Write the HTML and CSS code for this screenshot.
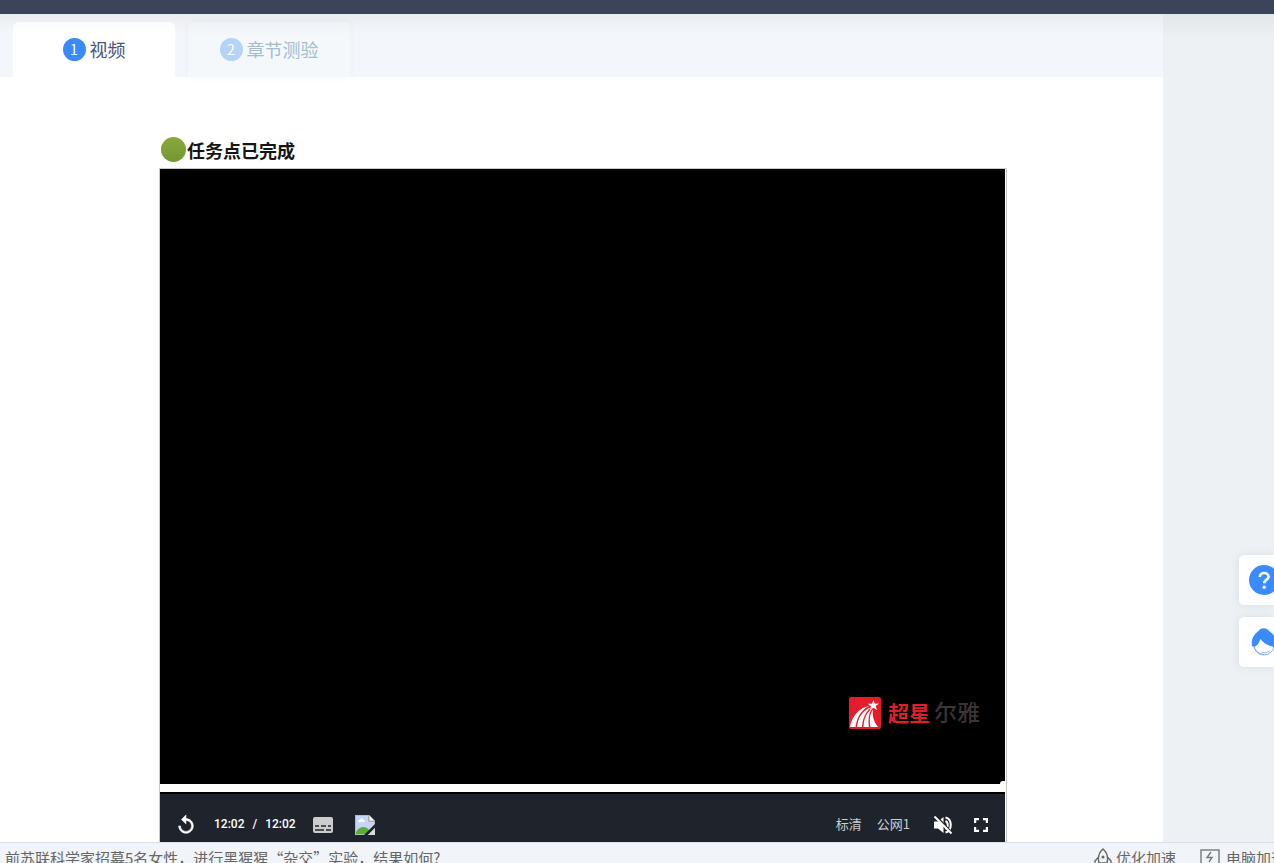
FILE: index.html
```html
<!DOCTYPE html>
<html lang="zh-CN">
<head>
<meta charset="utf-8">
<title>视频</title>
<link rel="stylesheet" href="styles.css">
</head>
<body>
<header class="topbar"></header>
<div class="workspace">
  <main class="content">
    <nav class="tabs">
      <button class="tab tab-active" type="button"><span class="tab-number">1</span><span class="tab-label">视频</span></button>
      <button class="tab" type="button"><span class="tab-number">2</span><span class="tab-label">章节测验</span></button>
    </nav>
    <section class="lesson">
      <p class="task"><span class="task-dot"></span>任务点已完成</p>
      <div class="player">
        <div class="screen">
          <div class="brand">
            <svg class="brand-icon" viewBox="0 0 32 32" aria-hidden="true">
              <rect width="32" height="32" rx="2" fill="#e11d2b"/>
              <path d="M24.500 3l1.400 3.700 4-.2-3.200 2.500 1.300 4-3.600-2.300-3.400 2.500 1.200-4-3.600-2.400 4.300-.1z" fill="#fff"/>
              <path d="M1 30C3 19 10 11 21 8.500 12 13 8 20 6.500 30zM8 30C9 21 13 14 22 10 16 16 13.500 22 13 30zM14.500 30C15 22 17 16 23 11.500 19.500 17 19 23 20 30zM21.500 30C20 22 21 17 24 12.500 23 19 25 25 29 30z" fill="#fff"/>
            </svg>
            <span class="brand-script">超星</span>
            <span class="brand-name">尔雅</span>
          </div>
        </div>
        <div class="progress"></div>
        <div class="controls">
          <button class="control replay" type="button" aria-label="重播">
            <svg viewBox="0 0 24 24" width="22" height="22"><path d="M12 5V1L7 6l5 5V7c3.310 0 6 2.690 6 6s-2.690 6-6 6-6-2.690-6-6H4c0 4.420 3.580 8 8 8s8-3.580 8-8-3.580-8-8-8z" fill="#fff" stroke="#fff" stroke-width=".6"/></svg>
          </button>
          <div class="time"><span>12:02</span><span>/</span><span>12:02</span></div>
          <button class="control captions" type="button" aria-label="字幕">
            <svg viewBox="0 0 20 16" width="20" height="16"><rect width="20" height="16" rx="2" fill="#ccc"/><path d="M2 9h4M8 9h5M15 9h3M2 13h9M13 13h5" stroke="#1f242c" stroke-width="1.500"/></svg>
          </button>
          <svg class="broken" viewBox="0 0 20 20" width="20" height="20" aria-hidden="true">
            <path d="M0 0h14l6 6v14H0z" fill="#b9b9b9"/><path d="M1 1h12v6h6v12H1z" fill="#c3d5f8"/>
            <path d="M14 0l6 6h-6z" fill="#f5f5f5" stroke="#999" stroke-width=".7"/>
            <path d="M3 7c0-2 2-2 2.500-3C7 2.500 8.500 4 8.500 5c1.500 0 1.500 2 .5 2z" fill="#fff"/>
            <path d="M1 19v-2c3-5 9-7 13-2l2 4z" fill="#5aad35"/><path d="M20 9v4l-7 7H9z" fill="#1f242c"/><path d="M20 13v7h-7z" fill="#d5dbe5"/>
          </svg>
          <button class="control quality" type="button">标清</button>
          <button class="control line" type="button">公网1</button>
          <button class="control mute" type="button" aria-label="取消静音">
            <svg viewBox="0 0 20 20" width="20" height="20"><path d="M1 6.500h4L10.500 2v16L5 13.500H1z" fill="#fff"/><path d="M12.500 6c3 1.500 3 6.500 0 8M12.500 2.500c7 1.500 7 13.500 0 15" fill="none" stroke="#fff" stroke-width="2"/><path d="M3 1l16 17" stroke="#1f242c" stroke-width="2"/><path d="M1.500 1.500l17 17" stroke="#fff" stroke-width="2"/></svg>
          </button>
          <button class="control full" type="button" aria-label="全屏">
            <svg viewBox="0 0 14 14" width="14" height="14"><path d="M1 5V1h4M9 1h4v4M13 9v4H9M5 13H1V9" fill="none" stroke="#fff" stroke-width="2.400"/></svg>
          </button>
        </div>
      </div>
    </section>
  </main>
  <aside class="helpers">
    <button class="helper" type="button" aria-label="帮助">
      <svg viewBox="0 0 30 30" width="30" height="30"><circle cx="15" cy="15" r="15" fill="#3a8bff"/><path d="M10.800 12c0-5.200 8.800-5.200 8.800-.3 0 3-4.400 3-4.400 6.500" fill="none" stroke="#fff" stroke-width="2.600"/><circle cx="15.200" cy="22.300" r="1.700" fill="#fff"/></svg>
    </button>
    <button class="helper" type="button" aria-label="客服">
      <svg viewBox="0 0 30 30" width="30" height="30"><circle cx="15" cy="18" r="10" fill="#fff" stroke="#78adfa" stroke-width="1"/><path d="M3 19.500C2 12 5 7 9 4.500 11.500 0 18 0 20.500 4.500 25 7 28 12 27 19.500l-2.500.5C20 18.500 15 17 11.500 12 10 16 8 18.500 6 19.500z" fill="#3a8bff"/><path d="M13 25c3 1.500 6 .5 8-1.500M5 20c2 5 5 7 10 7.500" fill="none" stroke="#78adfa"/></svg>
    </button>
  </aside>
</div>
<footer class="status">
  <a class="news" href="#">前苏联科学家招募5名女性，进行黑猩猩“杂交”实验，结果如何?</a>
  <button class="tool" type="button"><svg viewBox="0 0 18 20" width="18" height="20"><path d="M5 15C3.500 9 5.500 4 9 1c3.500 3 5.500 8 4 14zM4.500 9L1 13v5l4-3M13.500 9l3.500 4v5l-4-3" fill="none" stroke="#666" stroke-width="1.400"/><circle cx="9" cy="9" r="1.500" fill="#666"/></svg>优化加速</button>
  <button class="tool computer" type="button"><svg viewBox="0 0 20 20" width="20" height="20"><rect x="1" y="2" width="18" height="14" fill="none" stroke="#777" stroke-width="1.400"/><path d="M11 4L7 9.500h5L9 14M5 19h10" fill="none" stroke="#777" stroke-width="1.400"/></svg>电脑加速</button>
</footer>
</body>
</html>
```

FILE: styles.css
```css
* { box-sizing: border-box; }
body {
  margin: 0;
  height: 100vh;
  display: flex;
  flex-direction: column;
  overflow: hidden;
  background: #edf1f4;
  font-family: "Noto Sans CJK SC", sans-serif;
}
button {
  border: 0;
  padding: 0;
  background: none;
  font: inherit;
  color: inherit;
}
svg { display: block; flex: none; }
.topbar {
  flex: none;
  height: 14px;
  background: #3c4459;
}
.workspace {
  flex: 1;
  min-height: 0;
  display: flex;
  overflow: hidden;
}
.content {
  flex: 1;
  min-width: 0;
  display: flex;
  flex-direction: column;
  background: #fff;
}
.tabs {
  flex: none;
  height: 63px;
  display: flex;
  align-items: flex-end;
  gap: 13px;
  padding-left: 13px;
  background: linear-gradient(#ebecf0, #f3f7fb 20px);
}
.tab {
  width: 162px;
  height: 55px;
  display: flex;
  align-items: center;
  justify-content: center;
  gap: 4px;
  border-radius: 6px 6px 0 0;
  background: linear-gradient(#f0f2f5, #f4f8fb 14px);
  box-shadow: 0 0 6px rgba(60, 100, 140, .06);
  color: #a3bcd0;
  font-size: 18px;
}
.tab-active {
  background: linear-gradient(#fcfcfd, #fff 14px);
  box-shadow: none;
  color: #4a5578;
}
.tab-label { padding-bottom: 2px; }
.tab-number {
  width: 23px;
  height: 23px;
  border-radius: 50%;
  background: #b5d3f9;
  color: #fff;
  font-size: 14px;
  line-height: 23px;
  text-align: center;
}
.tab-active .tab-number { background: #3a8bff; }
.lesson {
  flex: 1;
  min-height: 0;
  display: flex;
  flex-direction: column;
  padding: 57px 156px 0 159px;
}
.task {
  display: flex;
  align-items: center;
  gap: 1px;
  height: 34px;
  margin: 0;
  padding: 0 2px 3px;
  color: #161616;
  font-size: 18px;
  font-weight: 700;
}
.task-dot {
  width: 25px;
  height: 25px;
  border-radius: 50%;
  background: linear-gradient(#89a93a, #759632);
}
.player {
  flex: 1;
  min-height: 0;
  display: flex;
  flex-direction: column;
  padding-right: 1px;
  border: 1px solid #c8c8c8;
  border-bottom: 0;
}
.screen {
  flex: 1;
  display: flex;
  align-items: flex-end;
  justify-content: flex-end;
  padding: 0 25px 55px 0;
  background: #000;
}
.brand {
  display: flex;
  align-items: center;
  height: 32px;
}
.brand-icon { width: 32px; height: 32px; margin-right: 7px; }
.brand-script {
  margin-right: 4px;
  padding-bottom: 2px;
  color: #df1f2c;
  font-size: 21px;
  font-weight: 700;
}
.brand-name {
  padding-bottom: 4px;
  color: #3b3437;
  font-size: 23px;
  font-weight: 500;
}
.progress {
  position: relative;
  flex: none;
  height: 10px;
  border-bottom: 2px solid #000;
  background: #fff;
}
.progress::before {
  content: "";
  position: absolute;
  right: 0;
  top: -3px;
  width: 5px;
  height: 3px;
  border-top-left-radius: 4px;
  background: #fff;
}
.controls {
  flex: none;
  height: 48px;
  display: flex;
  align-items: center;
  padding: 14px 17px 0 15px;
  background: #1f242c;
  color: #ccc;
  font-size: 13px;
}
.time {
  display: flex;
  gap: 8px;
  margin: 0 17px;
  padding-bottom: 3px;
  color: #fff;
  font-family: Roboto, sans-serif;
  font-size: 12px;
  font-weight: 500;
}
.broken { margin-left: 22px; }
.quality, .line { padding-bottom: 3px; }
.quality { margin: 0 15px 0 auto; }
.line { margin-right: 23px; }
.mute { margin-right: 21px; }
.helpers {
  width: 111px;
  flex: none;
  display: flex;
  flex-direction: column;
  align-items: flex-end;
  justify-content: flex-end;
  gap: 12px;
  padding-bottom: 175px;
  background: linear-gradient(#e2e6e9, #edf1f4 24px);
}
.helper {
  width: 35px;
  height: 50px;
  display: flex;
  align-items: center;
  padding-left: 10px;
  overflow: hidden;
  border-radius: 5px 0 0 5px;
  background: #fff;
  box-shadow: 0 0 8px rgba(60, 90, 130, .12);
}
.status {
  flex: none;
  height: 21px;
  display: flex;
  align-items: flex-start;
  padding-left: 5px;
  overflow: hidden;
  border-top: 1px solid #d8e0e8;
  background: #f1f5f9;
  color: #666;
  font-size: 15px;
  line-height: 20px;
  white-space: nowrap;
}
.news {
  margin-right: auto;
  padding-top: 5px;
  color: inherit;
  text-decoration: none;
}
.tool {
  flex: none;
  display: flex;
  gap: 4px;
  padding-top: 5px;
}
.computer {
  width: 74px;
  margin-left: 24px;
  gap: 6px;
  overflow: hidden;
}
```
